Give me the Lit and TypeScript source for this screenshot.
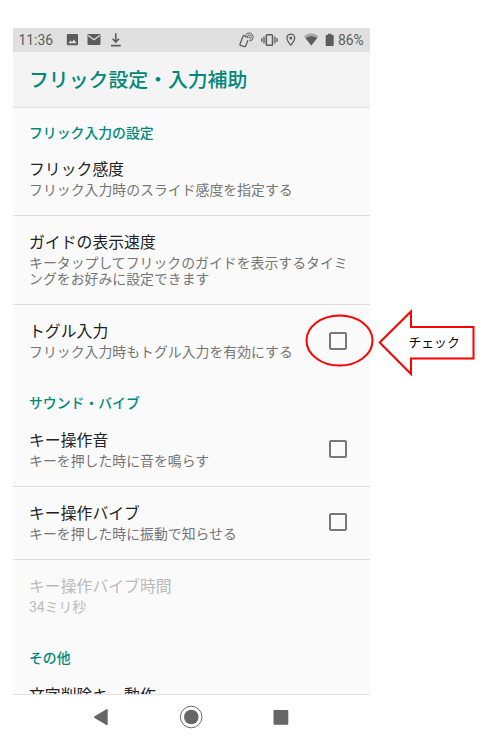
import { LitElement, html, css, svg, nothing } from "lit";
import { customElement, property } from "lit/decorators.js";

interface Setting {
  title: string;
  summary?: string;
  checkbox?: boolean;
  disabled?: boolean;
  height: number;
}

interface Section {
  name: string;
  rows: Setting[];
}

const SECTIONS: Section[] = [
  {
    name: "フリック入力の設定",
    rows: [
      { title: "フリック感度", summary: "フリック入力時のスライド感度を指定する", height: 73 },
      {
        title: "ガイドの表示速度",
        summary: "キータップしてフリックのガイドを表示するタイミングをお好みに設定できます",
        height: 89,
      },
      { title: "トグル入力", summary: "フリック入力時もトグル入力を有効にする", checkbox: true, height: 73 },
    ],
  },
  {
    name: "サウンド・バイブ",
    rows: [
      { title: "キー操作音", summary: "キーを押した時に音を鳴らす", checkbox: true, height: 73 },
      { title: "キー操作バイブ", summary: "キーを押した時に振動で知らせる", checkbox: true, height: 73 },
      { title: "キー操作バイブ時間", summary: "34ミリ秒", disabled: true, height: 73 },
    ],
  },
  { name: "その他", rows: [{ title: "文字削除キー動作", height: 73 }] },
];

@customElement("status-bar")
class StatusBar extends LitElement {
  static styles = css`
    :host {
      display: flex;
      align-items: center;
      height: 24px;
      padding: 0 6px 0 5.5px;
      box-sizing: border-box;
      background: #e0e0e0;
      color: #5c5c5c;
      font: 400 13.9px/24px Roboto, sans-serif;
    }
    .time { width: 47px; }
    .battery { width: 26px; margin-left: 3px; font-size: 13.9px; }
    .spacer { flex: 1; }
    svg { display: block; flex: none; }
  `;

  render() {
    return html`
      <span class="time">11:36</span>
      <svg width="60" height="24" viewBox="0 0 60 24" fill="#5c5c5c">
        <path fill-rule="evenodd" d="M1.800 6h9.200q1 0 1 1v9.200q0 1-1 1H1.800q-1 0-1-1V7q0-1 1-1zM2.400 15.200h8.200L8 11.600 6 14 4.500 12.400z"/>
        <path d="M22.500 6h11q1 0 1 1v9q0 1-1 1h-11q-1 0-1-1V7q0-1 1-1z"/>
        <path d="M22.200 7.500l5.800 4.200 5.800-4.200" fill="none" stroke="#e0e0e0" stroke-width="1.300"/>
        <path d="M49.800 5.200v8.500M46.600 10.800l3.200 3.200 3.200-3.200M45 17.600h9.700" fill="none" stroke="#5c5c5c" stroke-width="1.600"/>
      </svg>
      <span class="spacer"></span>
      <svg width="96" height="24" viewBox="239 28 96 24" fill="none" stroke="#5c5c5c">
        <path d="M246 36.300l-1.900-.5q-.9-.2-1.200.7l-2.900 7.800q-.3.900.6 1.200l3.900 1.100q.9.200 1.200-.7l2.200-5.600" stroke-width="1.300"/>
        <path d="M246.200 38q-1.600-4.600 2.500-5 4.500.1 4.400 4.500-.4 3.400-3.600 3.500M247.700 38.200q-.8-3.100 1.200-3.300 2.400.1 2.300 2.600-.2 1.500-1.400 1.700" stroke-width="1"/>
        <path d="M249.200 36.700v1.500" stroke-width="1.100"/>
        <rect x="266.300" y="34.700" width="6.200" height="10.600" rx="0.900" stroke-width="1.500"/>
        <path d="M264 36.500v7M274.900 36.500v7M261.900 38v4M277 38v4" stroke-width="1.300"/>
        <path d="M290.800 45.200q-3.900-4.600-3.900-7.200a3.900 3.900 0 0 1 7.800 0q0 2.600-3.900 7.200z" stroke-width="1.300"/>
        <circle cx="290.800" cy="38" r="1.500" fill="#5c5c5c" stroke="none"/>
        <path d="M304 36.300q7.300-6 14.600 0l-7.300 9.100z" fill="#a9a9a9" stroke="none"/>
        <path d="M305.400 38.100q5.900-3.600 11.800 0l-5.900 7.300z" fill="#5c5c5c" stroke="none"/>
        <path d="M326.300 35h1.600v-1.200h3.500V35h1.700q.6 0 .6.600v9.700q0 .7-.6.700h-6.800q-.6 0-.6-.7v-9.700q0-.6.600-.6z" fill="#5c5c5c" stroke="none"/>
      </svg>
      <span class="battery">86%</span>
    `;
  }
}

@customElement("setting-row")
class SettingRow extends LitElement {
  @property({ attribute: false }) setting!: Setting;
  @property({ type: Boolean }) divided = false;

  static styles = css`
    :host { display: block; flex: none; }
    .row {
      box-sizing: border-box;
      display: flex;
      align-items: center;
      padding: 0 23px 2px 16px;
    }
    .divided { border-bottom: 1px solid #dedede; }
    .text { flex: 1; align-self: flex-start; padding-top: 17px; white-space: nowrap; }
    .title { font-size: 15.85px; line-height: 20px; color: #212121; }
    .summary {
      font-size: 13.88px;
      line-height: 16.5px;
      color: #757575;
      margin-top: 1.5px;
      width: 325px;
      white-space: normal;
      word-break: break-all;
    }
    .disabled .title,
    .disabled .summary { color: #bababa; }
    .check .summary { width: auto; }
    .box {
      flex: none;
      box-sizing: border-box;
      width: 18px;
      height: 18px;
      border: 2px solid #777;
      border-radius: 2px;
    }
  `;

  render() {
    const s = this.setting;
    return html`
      <div
        class="row ${this.divided ? "divided" : ""} ${s.disabled ? "disabled" : ""} ${s.checkbox ? "check" : ""}"
        style="height:${s.height}px"
      >
        <div class="text">
          <div class="title">${s.title}</div>
          ${s.summary ? html`<div class="summary">${s.summary}</div>` : nothing}
        </div>
        ${s.checkbox ? html`<span class="box"></span>` : nothing}
      </div>
    `;
  }
}

@customElement("app-root")
class AppRoot extends LitElement {
  static styles = css`
    :host {
      display: block;
      position: relative;
      box-sizing: border-box;
      width: 488px;
      height: 744px;
      padding: 28px 0 0 13px;
      overflow: hidden;
      background: #fff;
      font-family: Roboto, "Noto Sans CJK JP", sans-serif;
    }
    .phone { width: 357px; height: 716px; display: flex; flex-direction: column; }
    header {
      box-sizing: border-box;
      height: 56px;
      flex: none;
      padding-left: 16px;
      border-bottom: 1px solid #dfdfdf;
      background: #f4f4f4;
      color: #00897b;
      font-size: 19.85px;
      font-weight: 500;
      line-height: 57px;
      white-space: nowrap;
    }
    main {
      height: 586px;
      flex: none;
      overflow: hidden;
      background: #fafafa;
      display: flex;
      flex-direction: column;
    }
    .section {
      box-sizing: border-box;
      flex: none;
      height: 36px;
      padding: 15px 0 0 16px;
      color: #00897b;
      font-size: 13.85px;
      font-weight: 500;
      line-height: 20px;
    }
    .section:first-child { height: 35px; }
    nav { flex: 1; border-top: 1px solid #e3e3e3; background: #fff; }
    svg { display: block; }
    .marks { position: absolute; left: 0; top: 0; }
    .note {
      position: absolute;
      left: 408.5px;
      top: 333px;
      font: 400 12.8px/18px "Noto Sans CJK JP", sans-serif;
      color: #000;
      white-space: nowrap;
    }
  `;

  render() {
    return html`
      <div class="phone">
        <status-bar></status-bar>
        <header>フリック設定・入力補助</header>
        <main>
          ${SECTIONS.map(
            (sec) => html`
              <div class="section">${sec.name}</div>
              ${sec.rows.map(
                (r, i) => html`<setting-row .setting=${r} ?divided=${i < sec.rows.length - 1}></setting-row>`
              )}
            `
          )}
        </main>
        <nav>
          <svg width="357" height="48" viewBox="13 695 357 48" fill="#666">
            <path d="M94.500 716.200l12-7q1.200-.6 1.200.7v14.400q0 1.300-1.200.7l-12-7q-1.300-.9 0-1.800z"/>
            <circle cx="191.200" cy="717" r="10.800" fill="none" stroke="#666" stroke-width="1"/>
            <circle cx="191.300" cy="717" r="7.300"/>
            <rect x="273.500" y="710" width="14.800" height="14.800" rx="0.800"/>
          </svg>
        </nav>
      </div>
      <svg class="marks" width="488" height="744" viewBox="0 0 488 744" fill="none" stroke="#f00" stroke-width="2">
        ${svg`
          <ellipse cx="339.500" cy="340.500" rx="33" ry="25"/>
          <path d="M379.700 342.500L411 311.500V327H473.500V358.500H411V374z" fill="#fff"/>
        `}
      </svg>
      <span class="note">チェック</span>
    `;
  }
}
